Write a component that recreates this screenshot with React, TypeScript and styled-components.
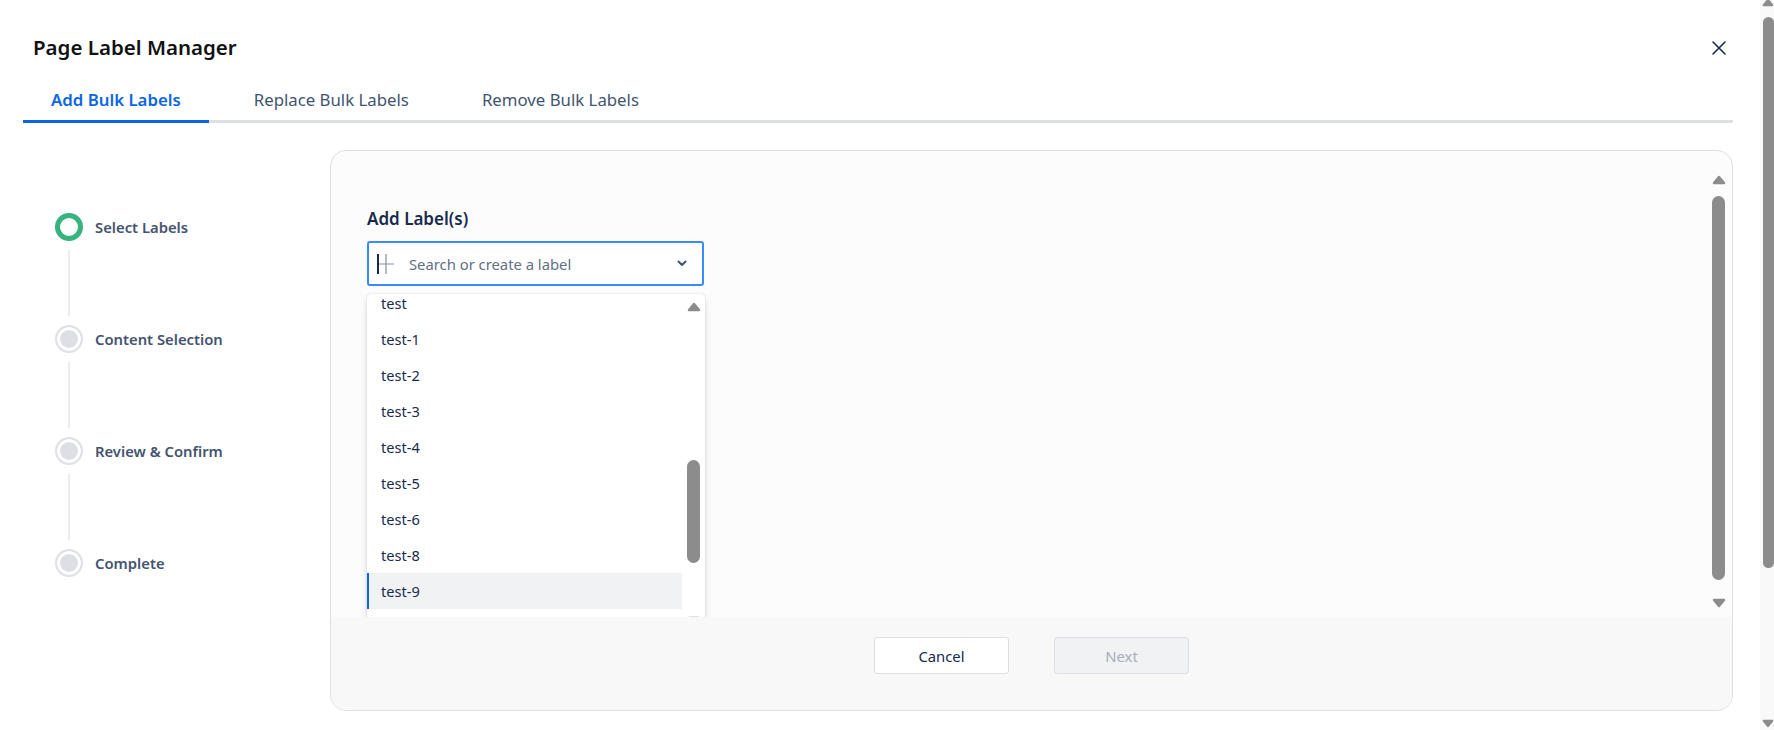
import React from 'react';
import styled, { createGlobalStyle, css } from 'styled-components';

const GlobalStyle = createGlobalStyle`
  html, body {
    margin: 0;
    height: 100%;
    overflow: hidden;
    background: #ffffff;
    font-family: "Noto Sans", "Open Sans", Arial, sans-serif;
    color: #172b4d;
  }
  * { box-sizing: border-box; }
`;

const Page = styled.div`
  display: flex;
  height: 730px;
`;

const Modal = styled.div`
  flex: 1;
  display: flex;
  flex-direction: column;
  padding: 0 27px 0 23px;
`;

const Header = styled.div`
  height: 64px;
  padding: 31px 6px 0 10px;
  display: flex;
  align-items: center;
  justify-content: space-between;
`;

const Title = styled.h1`
  margin: 0;
  font-size: 20.5px;
  font-weight: 600;
  color: #101214;
  line-height: 33px;
`;

const CloseButton = styled.button`
  border: none;
  background: none;
  padding: 0;
  width: 16px;
  height: 16px;
  display: flex;
  align-items: center;
  justify-content: center;
  cursor: pointer;
`;

const TabList = styled.div`
  margin-top: 14px;
  display: flex;
  gap: 17px;
  box-shadow: inset 0 -3px 0 #dcdfe4;
`;

const Tab = styled.div<{ $active?: boolean }>`
  padding: 11px 28px 9px;
  font-size: 16.8px;
  line-height: 22px;
  color: #44546f;
  border-bottom: 3px solid transparent;
  ${(p) =>
    p.$active &&
    css`
      color: #0c66e4;
      font-weight: 600;
      border-bottom-color: #0c66e4;
    `}
`;

const Body = styled.div`
  margin-top: 27px;
  height: 561px;
  display: flex;
`;

const Sidebar = styled.div`
  width: 307px;
  padding: 63px 0 0 32px;
`;

const StepRow = styled.div`
  display: flex;
  align-items: center;
  gap: 12px;
`;

const StepDot = styled.div<{ $active?: boolean }>`
  width: 28px;
  height: 28px;
  border-radius: 50%;
  flex-shrink: 0;
  ${(p) =>
    p.$active
      ? css`
          border: 5px solid #36b37e;
          background: #ffffff;
        `
      : css`
          border: 2px solid #dfe1e6;
          background: #dcdfe4;
          box-shadow: inset 0 0 0 3px #ffffff;
        `}
`;

const StepLabel = styled.span`
  font-size: 14.8px;
  font-weight: 600;
  color: #44546f;
`;

const StepLine = styled.div`
  width: 2px;
  height: 66px;
  margin: 9px 0 9px 13px;
  background: #ebecf0;
`;

const Panel = styled.div`
  flex: 1;
  display: flex;
  flex-direction: column;
  border: 1px solid #dcdfe4;
  border-radius: 16px;
  background: #fcfcfc;
  overflow: hidden;
`;

const ScrollArea = styled.div`
  flex: 1;
  display: flex;
  overflow: hidden;
`;

const Content = styled.div`
  flex: 1;
  padding: 57px 0 0 36px;
`;

const FieldLabel = styled.div`
  font-size: 17px;
  font-weight: 600;
  line-height: 22px;
  color: #172b4d;
  margin-bottom: 11px;
`;

const Combo = styled.div`
  position: relative;
  width: 337px;
`;

const InputBox = styled.div`
  height: 45px;
  border: 2px solid #388bff;
  border-radius: 3px;
  background: #ffffff;
  display: flex;
  align-items: center;
  padding: 0 15px 0 8px;
`;

const Caret = styled.span`
  width: 2px;
  height: 20px;
  background: #172b4d;
`;

const Placeholder = styled.span`
  flex: 1;
  margin-left: 14px;
  font-size: 14.8px;
  color: #626f86;
`;

const Menu = styled.div`
  position: absolute;
  top: calc(100% + 8px);
  left: 0;
  width: 338px;
  height: 336px;
  display: flex;
  background: #ffffff;
  border-radius: 4px;
  box-shadow: 0 4px 8px -2px rgba(9, 30, 66, 0.25), 0 0 1px rgba(9, 30, 66, 0.31);
  overflow: hidden;
`;

const OptionList = styled.div`
  flex: 1;
  margin-top: -9px;
`;

const Option = styled.div<{ $selected?: boolean }>`
  height: 36px;
  display: flex;
  align-items: center;
  padding-left: 12px;
  font-size: 14.6px;
  color: #172b4d;
  border-left: 2px solid transparent;
  ${(p) =>
    p.$selected &&
    css`
      background: #f1f2f4;
      border-left-color: #0c66e4;
    `}
`;

const Rail = styled.div<{ $width: number; $pad: number }>`
  width: ${(p) => p.$width}px;
  flex-shrink: 0;
  display: flex;
  flex-direction: column;
  align-items: center;
  padding-top: ${(p) => p.$pad}px;
`;

const Thumb = styled.div<{ $top: number; $height: number; $width: number }>`
  width: ${(p) => p.$width}px;
  height: ${(p) => p.$height}px;
  margin-top: ${(p) => p.$top}px;
  border-radius: 8px;
  background: #8c8c8c;
  flex-shrink: 0;
`;

const ArrowSlot = styled.div<{ $top?: number }>`
  margin-top: ${(p) => p.$top ?? 0}px;
  display: flex;
  flex-shrink: 0;
`;

const PanelRail = styled(Rail)`
  margin-right: 5px;
`;

const PageRail = styled(Rail)`
  background: #f9f9f9;
  align-items: flex-end;
`;

const Footer = styled.div`
  height: 93px;
  flex-shrink: 0;
  background: #f8f8f9;
  display: flex;
  align-items: flex-start;
  justify-content: center;
  gap: 45px;
  padding-top: 20px;
`;

const Button = styled.button<{ $disabled?: boolean }>`
  width: 135px;
  height: 37px;
  border: 1px solid #dcdfe4;
  border-radius: 3px;
  background: #ffffff;
  font-family: inherit;
  font-size: 14.8px;
  color: #172b4d;
  cursor: pointer;
  ${(p) =>
    p.$disabled &&
    css`
      background: #f1f2f4;
      color: #a5adba;
      cursor: default;
    `}
`;

const Arrow = ({ down, w = 14, h = 10 }: { down?: boolean; w?: number; h?: number }) => (
  <svg width={w} height={h} viewBox="0 0 14 10">
    <polygon
      points={down ? '2,2 12,2 7,8' : '2,8 12,8 7,2'}
      fill="#8c8c8c"
      stroke="#8c8c8c"
      strokeWidth="2.5"
      strokeLinejoin="round"
    />
  </svg>
);

const CloseIcon = () => (
  <svg width="14" height="14" viewBox="0 0 14 14">
    <path d="M1 1 L13 13 M13 1 L1 13" stroke="#172b4d" strokeWidth="1.6" strokeLinecap="round" />
  </svg>
);

const PlusIcon = () => (
  <svg width="16" height="20" viewBox="0 0 16 20">
    <path d="M0 10 H15 M7 0 V20" stroke="#8590a2" strokeWidth="1.2" />
  </svg>
);

const ChevronIcon = () => (
  <svg width="10" height="7" viewBox="0 0 10 7">
    <path d="M1.5 1.5 L5 5 L8.5 1.5" stroke="#44546f" strokeWidth="2" fill="none" strokeLinecap="round" strokeLinejoin="round" />
  </svg>
);

const steps = ['Select Labels', 'Content Selection', 'Review & Confirm', 'Complete'];
const tabs = ['Add Bulk Labels', 'Replace Bulk Labels', 'Remove Bulk Labels'];
const options = ['test', 'test-1', 'test-2', 'test-3', 'test-4', 'test-5', 'test-6', 'test-8', 'test-9'];

const App: React.FC = () => (
  <Page>
    <GlobalStyle />
    <Modal>
      <Header>
        <Title>Page Label Manager</Title>
        <CloseButton aria-label="Close">
          <CloseIcon />
        </CloseButton>
      </Header>
      <TabList>
        {tabs.map((t, i) => (
          <Tab key={t} $active={i === 0}>
            {t}
          </Tab>
        ))}
      </TabList>
      <Body>
        <Sidebar>
          {steps.map((s, i) => (
            <React.Fragment key={s}>
              <StepRow>
                <StepDot $active={i === 0} />
                <StepLabel>{s}</StepLabel>
              </StepRow>
              {i < steps.length - 1 && <StepLine />}
            </React.Fragment>
          ))}
        </Sidebar>
        <Panel>
          <ScrollArea>
            <Content>
              <FieldLabel>Add Label(s)</FieldLabel>
              <Combo>
                <InputBox>
                  <Caret />
                  <PlusIcon />
                  <Placeholder>Search or create a label</Placeholder>
                  <ChevronIcon />
                </InputBox>
                <Menu>
                  <OptionList>
                    {options.map((o) => (
                      <Option key={o} $selected={o === 'test-9'}>
                        {o}
                      </Option>
                    ))}
                  </OptionList>
                  <Rail $width={23} $pad={8}>
                    <ArrowSlot>
                      <Arrow />
                    </ArrowSlot>
                    <Thumb $top={148} $height={103} $width={13} />
                    <ArrowSlot $top={53}>
                      <Arrow down />
                    </ArrowSlot>
                  </Rail>
                </Menu>
              </Combo>
            </Content>
            <PanelRail $width={17} $pad={24}>
              <ArrowSlot>
                <Arrow />
              </ArrowSlot>
              <Thumb $top={11} $height={384} $width={13} />
              <ArrowSlot $top={18}>
                <Arrow down />
              </ArrowSlot>
            </PanelRail>
          </ScrollArea>
          <Footer>
            <Button>Cancel</Button>
            <Button $disabled disabled>
              Next
            </Button>
          </Footer>
        </Panel>
      </Body>
    </Modal>
    <PageRail $width={14} $pad={0}>
      <ArrowSlot $top={-2}>
        <Arrow w={12} h={9} />
      </ArrowSlot>
      <Thumb $top={10} $height={551} $width={11} />
      <ArrowSlot $top={151}>
        <Arrow down w={12} h={9} />
      </ArrowSlot>
    </PageRail>
  </Page>
);

export default App;
